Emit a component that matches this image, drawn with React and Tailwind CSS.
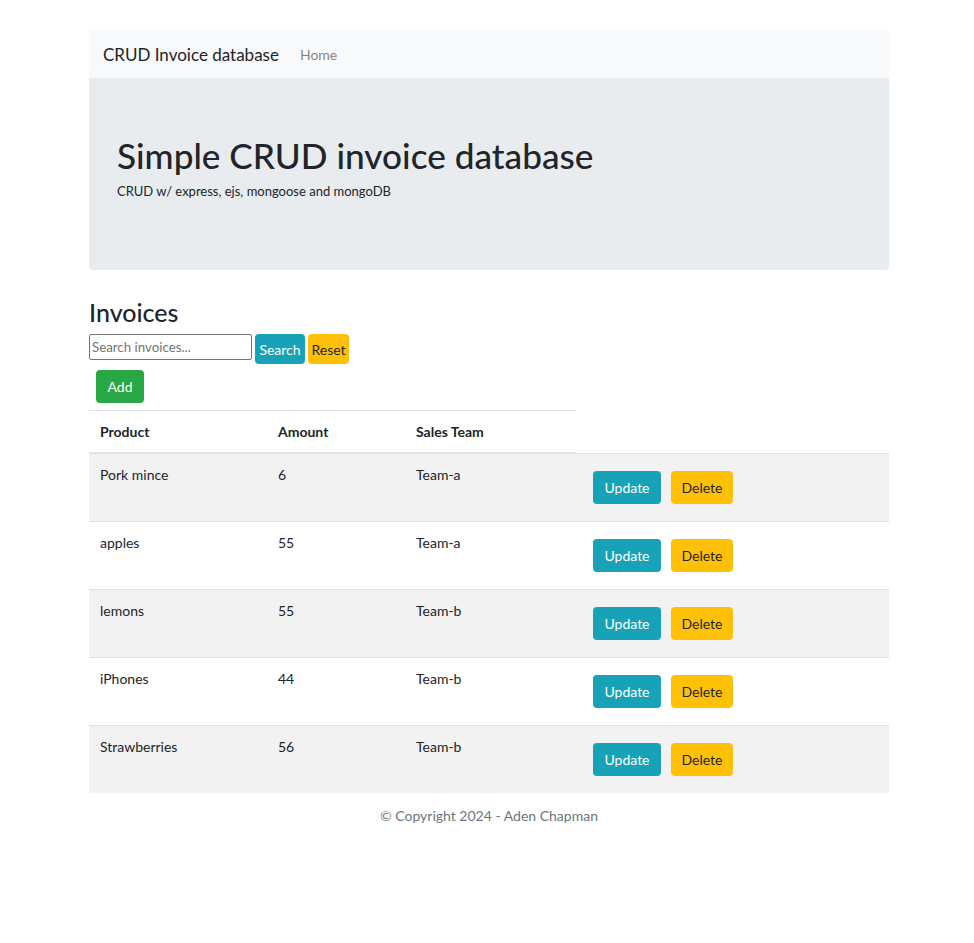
import React from 'react';

const invoices = [
  { id: 1, product: 'Pork mince', amount: 6, team: 'Team-a' },
  { id: 2, product: 'apples', amount: 55, team: 'Team-a' },
  { id: 3, product: 'lemons', amount: 55, team: 'Team-b' },
  { id: 4, product: 'iPhones', amount: 44, team: 'Team-b' },
  { id: 5, product: 'Strawberries', amount: 56, team: 'Team-b' },
];

const App = () => {
  return (
    <div className="min-h-[943px] bg-white text-[#212529] text-[14px] leading-[1.5] font-['Lato',sans-serif]">
      <div className="w-[800px] ml-[89px] pt-[30px]">
        {/* Navbar */}
        <nav className="h-[48px] bg-[#f8f9fa] rounded-t-[4px] flex items-center px-[14px]">
          <span className="text-[17px] leading-none mr-[14px] whitespace-nowrap">CRUD Invoice database</span>
          <a href="#" className="px-[7px] text-[rgba(0,0,0,0.5)]">Home</a>
        </nav>

        {/* Jumbotron */}
        <div className="h-[192px] bg-[#e9ecef] rounded-b-[4px] px-[28px] pt-[56px]">
          <h1 className="text-[35.2px] leading-[1.23] font-medium mb-[5px] whitespace-nowrap">Simple CRUD invoice database</h1>
          <p className="text-[13px]">CRUD w/ express, ejs, mongoose and mongoDB</p>
        </div>

        {/* Invoices */}
        <h3 className="mt-[27px] text-[25px] leading-[1.2] font-medium mb-[7px]">Invoices</h3>
        <div className="flex items-start gap-[3px]">
          <input
            type="text"
            placeholder="Search invoices..."
            className="w-[163px] h-[26px] border border-[#767676] rounded-[2px] px-[2px] text-[13.3px] placeholder:text-[#757575] outline-none"
          />
          <button className="h-[30px] w-[50px] bg-[#17a2b8] text-white rounded-[4px] text-[14px]">Search</button>
          <button className="h-[30px] w-[41px] bg-[#ffc107] text-[#212529] rounded-[4px] text-[14px]">Reset</button>
        </div>
        <div className="pt-[6px] pb-[7px] pl-[7px]">
          <button className="h-[33px] w-[48px] bg-[#28a745] text-white rounded-[4px]">Add</button>
        </div>

        <table className="w-full border-collapse">
          <thead>
            <tr>
              <th className="w-[178px] text-left font-bold px-[11px] py-[10px] border-t border-b-2 border-[#dee2e6]">Product</th>
              <th className="w-[138px] text-left font-bold px-[11px] py-[10px] border-t border-b-2 border-[#dee2e6]">Amount</th>
              <th className="w-[171px] text-left font-bold px-[11px] py-[10px] border-t border-b-2 border-[#dee2e6]">Sales Team</th>
            </tr>
          </thead>
          <tbody>
            {invoices.map((inv, i) => (
              <tr key={inv.id} className={i % 2 === 0 ? 'bg-[#f2f2f2]' : 'bg-white'}>
                <td className="align-top px-[11px] pt-[10px] border-t border-[#dee2e6]">{inv.product}</td>
                <td className="align-top px-[11px] pt-[10px] border-t border-[#dee2e6]">{inv.amount}</td>
                <td className="align-top px-[11px] pt-[10px] border-t border-[#dee2e6]">{inv.team}</td>
                <td className="align-top px-[11px] py-[11px] border-t border-[#dee2e6]">
                  <div className="flex gap-[10px] m-[6px]">
                    <button className="h-[33px] w-[68px] bg-[#17a2b8] text-white rounded-[4px]">Update</button>
                    <button className="h-[33px] w-[62px] bg-[#ffc107] text-[#212529] rounded-[4px]">Delete</button>
                  </div>
                </td>
              </tr>
            ))}
          </tbody>
        </table>

        <footer className="text-center text-[#6c757d] mt-[12px]">© Copyright 2024 - Aden Chapman</footer>
      </div>
    </div>
  );
};

export default App;
